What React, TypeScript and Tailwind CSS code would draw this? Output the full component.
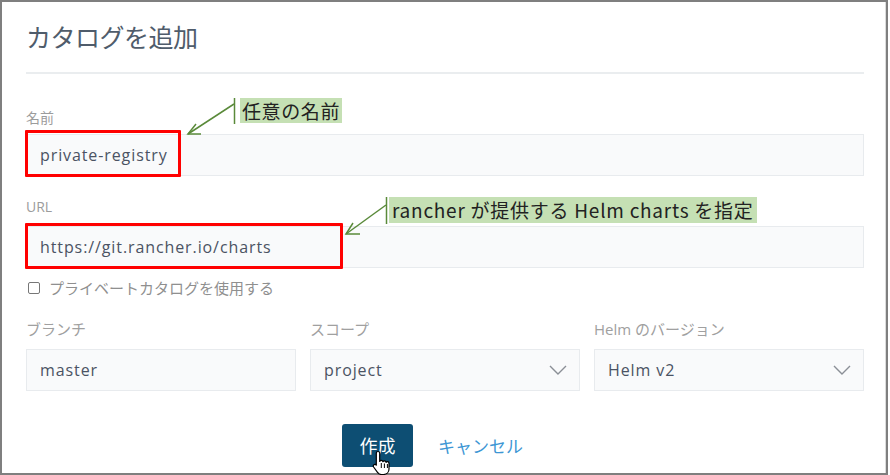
import React from "react";

const Chevron = () => (
  <svg width="18" height="10" viewBox="0 0 18 10" className="shrink-0">
    <polyline points="1,1 9,9 17,1" fill="none" stroke="#8a8f96" strokeWidth="1.4" />
  </svg>
);

const inputCls =
  "h-[42px] w-full bg-[#f9fafb] border border-[#e8ebee] flex items-center pl-[13px] pr-[12px] text-[16px] tracking-[0.9px] text-[#4b5363]";

const jp = { fontFamily: "'Noto Sans CJK JP', sans-serif" };

export default function App() {
  return (
    <div className="w-[890px] h-[475px] bg-white relative overflow-hidden" style={{ fontFamily: "'Open Sans', 'Noto Sans CJK JP', sans-serif" }}>
      <div className="w-[888px] h-[475px] border-2 border-[#7f7f7f] bg-white">
        <div className="h-full border-r border-[#dcdcdc] pl-[24px] pr-[21px] pt-[19px] flex flex-col">
          <h1 className="text-[25px] leading-[30px] text-[#4f5c6b] tracking-[-0.5px]" style={jp}>
            カタログを追加
          </h1>
          <div className="mt-[21px] h-[2px] bg-[#eaedef]" />

          <div className="mt-[33px] text-[14px] leading-[20px] text-[#9c9c9c]" style={jp}>名前</div>
          <div className="mt-[7px] relative">
            <div className={inputCls}>private-registry</div>
            <div className="absolute left-[-1px] top-[-4px] w-[156px] h-[47px] border-[3px] border-[#ff0000] rounded-[1px]" />
          </div>

          <div className="mt-[21px] text-[14px] leading-[20px] text-[#9c9c9c]">URL</div>
          <div className="mt-[9px] relative">
            <div className={inputCls}>https://git.rancher.io/charts</div>
            <div className="absolute left-[-1px] top-[-3px] w-[318px] h-[46px] border-[3px] border-[#ff0000] rounded-[1px]" />
          </div>

          <label className="mt-[10px] flex items-center gap-[9px] h-[20px] text-[15px] text-[#8f8f8f]" style={jp}>
            <span className="ml-[2px] w-[12px] h-[12px] border border-[#777] rounded-[2px] bg-white" />
            <span>プライベートカタログを使用する</span>
          </label>

          <div className="mt-[21px] grid grid-cols-3 gap-x-[14px]">
            <div className="text-[15px] leading-[20px] text-[#a0a0a0]" style={jp}>ブランチ</div>
            <div className="text-[15px] leading-[20px] text-[#a0a0a0]" style={jp}>スコープ</div>
            <div className="text-[15px] leading-[20px] text-[#a0a0a0]">Helm のバージョン</div>
            <div className={"mt-[10px] " + inputCls}>master</div>
            <div className={"mt-[10px] justify-between " + inputCls}>
              <span>project</span>
              <Chevron />
            </div>
            <div className={"mt-[10px] justify-between " + inputCls}>
              <span>Helm v2</span>
              <Chevron />
            </div>
          </div>

          <div className="mt-[33px] flex items-center justify-center gap-[25px] pr-[25px]">
            <button className="w-[71px] h-[43px] rounded-[3px] bg-[#0d4e73] text-white text-[18px]" style={jp}>
              作成
            </button>
            <span className="text-[17px] text-[#3d96d4]" style={jp}>キャンセル</span>
          </div>
        </div>
      </div>

      {/* annotations */}
      <div
        className="absolute left-[240px] top-[98px] h-[25px] px-[2px] bg-[#c5e0b4] text-[19px] tracking-[0.6px] leading-[25px] text-[#222]"
        style={jp}
      >
        任意の名前
      </div>
      <div
        className="absolute left-[389px] top-[197px] h-[26px] px-[3px] bg-[#c5e0b4] text-[19px] tracking-[0.75px] leading-[26px] text-[#222]"
        style={jp}
      >
        rancher が提供する Helm charts を指定
      </div>
      <svg className="absolute left-0 top-0 pointer-events-none" width="890" height="475">
        <g stroke="#5a8a3a" strokeWidth="1.5" fill="none">
          <line x1="234.5" y1="98" x2="234.5" y2="124" />
          <line x1="234" y1="104" x2="188" y2="134" />
          <polyline points="196,124 188,134 201,134" />
          <line x1="386.5" y1="197" x2="386.5" y2="224" />
          <line x1="386" y1="205" x2="346" y2="234" />
          <polyline points="353,223 346,234 360,234" />
        </g>
      </svg>

      {/* hand cursor */}
      <svg className="absolute left-[372px] top-[450px]" width="22" height="26" viewBox="0 0 22 26">
        <path
          d="M6 1.5c1 0 1.7.7 1.7 1.7v8.2c.3-.6.9-1 1.6-1 .9 0 1.5.6 1.6 1.3.3-.5.9-.8 1.5-.8.9 0 1.5.6 1.6 1.4.3-.4.8-.6 1.300-.6 1 0 1.7.8 1.7 1.8v5.5c0 3.2-2.3 5.5-5.5 5.5H9.5c-1.8 0-3-.8-4-2.2L1.6 17c-.5-.8-.3-1.8.4-2.3.7-.5 1.7-.3 2.2.4l.1.1V3.2C4.3 2.2 5 1.5 6 1.5z"
          fill="#fff"
          stroke="#000"
          strokeWidth="1.2"
          strokeLinejoin="round"
        />
        <line x1="9.3" y1="13" x2="9.3" y2="18" stroke="#000" strokeWidth="1" />
        <line x1="12.4" y1="13.5" x2="12.4" y2="18" stroke="#000" strokeWidth="1" />
        <line x1="15.4" y1="14" x2="15.4" y2="18" stroke="#000" strokeWidth="1" />
      </svg>
    </div>
  );
}
